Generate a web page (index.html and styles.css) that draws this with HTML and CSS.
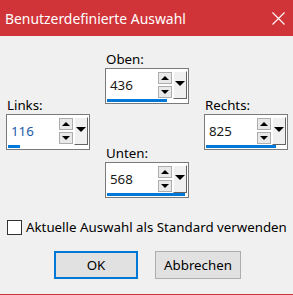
FILE: index.html
```html
<!DOCTYPE html>
<html lang="de">
<head>
    <meta charset="UTF-8">
    <meta name="viewport" content="width=device-width, initial-scale=1.0">
    <title>Benutzerdefinierte Auswahl</title>
    <link rel="stylesheet" href="styles.css">
</head>
<body>
<div class="window">
    <div class="titlebar">
        <span class="title">Benutzerdefinierte Auswahl</span>
        <svg class="close" width="13" height="13" viewBox="0 0 13 13">
            <path d="M0.5 0.5 L12.5 12.5 M12.5 0.5 L0.5 12.5" stroke="#fff" stroke-width="1.1" fill="none"/>
        </svg>
    </div>

    <div class="content">
        <div class="fields">
            <div class="col side">
                <label class="lbl">Links:</label>
                <div class="spin">
                    <div class="spin-main">
                        <span class="value blue">116</span>
                        <div class="arrows">
                            <span class="abtn"><i class="up"></i></span>
                            <span class="abtn"><i class="down"></i></span>
                        </div>
                        <span class="drop"><i class="dtri"></i></span>
                    </div>
                    <div class="bar" style="width: 12px"></div>
                </div>
            </div>

            <div class="col middle">
                <label class="lbl">Oben:</label>
                <div class="spin">
                    <div class="spin-main">
                        <span class="value">436</span>
                        <div class="arrows">
                            <span class="abtn"><i class="up"></i></span>
                            <span class="abtn"><i class="down"></i></span>
                        </div>
                        <span class="drop"><i class="dtri"></i></span>
                    </div>
                    <div class="bar" style="width: 60px"></div>
                </div>

                <label class="lbl lower">Unten:</label>
                <div class="spin">
                    <div class="spin-main">
                        <span class="value">568</span>
                        <div class="arrows">
                            <span class="abtn"><i class="up"></i></span>
                            <span class="abtn"><i class="down"></i></span>
                        </div>
                        <span class="drop"><i class="dtri"></i></span>
                    </div>
                    <div class="bar" style="width: 78px"></div>
                </div>
            </div>

            <div class="col side">
                <label class="lbl">Rechts:</label>
                <div class="spin">
                    <div class="spin-main">
                        <span class="value">825</span>
                        <div class="arrows">
                            <span class="abtn"><i class="up"></i></span>
                            <span class="abtn"><i class="down"></i></span>
                        </div>
                        <span class="drop"><i class="dtri"></i></span>
                    </div>
                    <div class="bar" style="width: 70px"></div>
                </div>
            </div>
        </div>

        <label class="check">
            <span class="box"></span>
            <span>Aktuelle Auswahl als Standard verwenden</span>
        </label>

        <div class="buttons">
            <button class="btn default">OK</button>
            <button class="btn">Abbrechen</button>
        </div>
    </div>
</div>
</body>
</html>
```

FILE: styles.css
```css
body{
    margin: 0;
    background-color: #f0f0f0;
    font-family: "Noto Sans", "Liberation Sans", sans-serif;
    color: #000;
}
.window{
    width: 293px;
    height: 295px;
    display: flex;
    flex-direction: column;
}
.titlebar{
    height: 36px;
    background-color: #d13438;
    color: #fff;
    display: flex;
    align-items: center;
    justify-content: space-between;
    padding: 0 8px 0 5px;
}
.title{
    font-size: 13.9px;
    margin-top: 1px;
}
.close{
    margin-top: 1px;
}
.content{
    flex: 1;
    border-bottom: 1px solid #d13438;
    display: flex;
    flex-direction: column;
}
.fields{
    display: flex;
    padding: 14px 0 0 6px;
    gap: 15px;
}
.col{
    display: flex;
    flex-direction: column;
    width: 84px;
}
.side{
    padding-top: 46px;
}
.middle{
    width: 84px;
}
.lbl{
    font-size: 13.3px;
    line-height: 18px;
    padding-left: 1px;
}
.lower{
    margin-top: 40px;
}
.spin{
    border: 1px solid #7a7a7a;
    background: #fff;
    height: 34px;
    display: flex;
    flex-direction: column;
}
.spin-main{
    height: 30px;
    display: flex;
}
.value{
    flex: 1;
    font-size: 13.3px;
    padding: 2px 0 0 4px;
    line-height: 28px;
    color: #1a1a1a;
}
.value.blue{
    color: #1e5ca8;
}
.arrows{
    display: flex;
    flex-direction: column;
    gap: 2px;
    padding-top: 3px;
    width: 14px;
    margin-right: 1px;
}
.abtn{
    height: 10px;
    border: 1px solid #adadad;
    background: #e9e9e9;
    display: flex;
    align-items: center;
    justify-content: center;
}
.up{
    border-left: 4px solid transparent;
    border-right: 4px solid transparent;
    border-bottom: 4px solid #000;
}
.down{
    border-left: 4px solid transparent;
    border-right: 4px solid transparent;
    border-top: 4px solid #000;
}
.drop{
    width: 12px;
    margin: 2px 1px 0 0;
    background: #f0f0f0;
    border-left: 1px solid #fff;
    border-top: 1px solid #fff;
    border-right: 1px solid #646464;
    border-bottom: 1px solid #646464;
    display: flex;
    align-items: center;
    justify-content: center;
}
.dtri{
    border-left: 5px solid transparent;
    border-right: 5px solid transparent;
    border-top: 5px solid #000;
    margin-top: -4px;
}
.bar{
    height: 3px;
    margin-left: 1px;
    background: #0078d7;
}
.check{
    display: flex;
    align-items: center;
    gap: 4px;
    margin: 20px 0 0 7px;
    font-size: 13.3px;
    line-height: 18px;
}
.box{
    width: 13px;
    height: 13px;
    border: 1px solid #333;
    background: #fff;
}
.buttons{
    display: flex;
    gap: 17px;
    margin: 15px 0 0 54px;
}
.btn{
    font-family: inherit;
    font-size: 13.3px;
    height: 28px;
    width: 86px;
    background: #e1e1e1;
    border: 1px solid #adadad;
    padding: 0;
    color: #000;
}
.btn.default{
    width: 84px;
    border: 2px solid #0078d7;
}
```
